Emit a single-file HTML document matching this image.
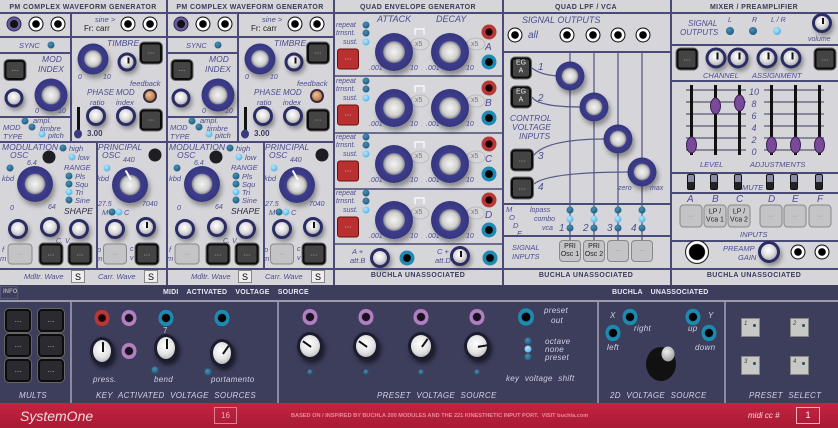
<!DOCTYPE html>
<html><head><meta charset="utf-8"><style>
*{margin:0;padding:0;box-sizing:border-box}
body{width:838px;height:428px;overflow:hidden;background:#d6d6da;font-family:"Liberation Sans",sans-serif;position:relative}
.a{position:absolute}
.c{position:absolute;transform:translate(-50%,-50%)}
.hl{position:absolute;height:1.5px;background:#4a4a78}
.vl{position:absolute;width:1.5px;background:#4a4a78}
.h{position:absolute;font:bold 7px "Liberation Sans",sans-serif;color:#3a3a5c;letter-spacing:.4px;white-space:nowrap;transform:translateX(-50%)}
.t{position:absolute;font:italic 7.5px "Liberation Sans",sans-serif;color:#4c4c90;white-space:nowrap;line-height:9px}
.tb{position:absolute;font:italic 10px "Liberation Sans",sans-serif;color:#4c4c90;white-space:nowrap;line-height:10px}
.sk{border-radius:50%;background:radial-gradient(circle at 45% 40%,#fff,#ddd 45%,#999 90%);border:3px solid #2c2c64;box-shadow:2px 3px 4px rgba(0,0,0,.35)}
.bk{border-radius:50%;background:radial-gradient(circle at 50% 50%,#f4f4f4 0,#d0d0d0 28%,#999 38%,#3d3d8c 42%,#2e2e72 100%);box-shadow:2px 4px 5px rgba(0,0,0,.35)}
.blk{border-radius:50%;background:#1e1e22}
.j{border-radius:50%;background:radial-gradient(circle,#000 0 33%,#fff 38% 58%,#111 63%)}
.jp{border-radius:50%;background:radial-gradient(circle,#111 0 35%,#6a5a9a 40% 60%,#20204a 65%)}
.jr{border-radius:50%;background:radial-gradient(circle,#1a0000 0 30%,#b83838 38% 70%,#501818 75%)}
.jb{border-radius:50%;background:radial-gradient(circle,#000 0 33%,#1d8ab0 40% 70%,#0d4058 75%)}
.jpu{border-radius:50%;background:radial-gradient(circle,#1a1020 0 33%,#b080c0 40% 68%,#40304a 74%)}
.led{width:7px;height:7px;border-radius:50%;background:radial-gradient(circle at 40% 35%,#4a90b8,#124a6a)}
.ledo{width:7px;height:7px;border-radius:50%;background:radial-gradient(circle at 40% 35%,#b0e8ff,#3aa0d8)}
.b{background:#444;border:2.5px solid #0c0c0c;border-radius:4px;color:#bbb;font:8px "Liberation Sans";text-align:center;line-height:14px;box-shadow:0 0 0 1px #666}
.g{background:#c4c4c6;border:1.5px solid #888;border-radius:4px;color:#888;font:7px "Liberation Sans";text-align:center}
.rb{background:#b83030;border:1.5px solid #6a1010;border-radius:3px;color:#f0c0c0;font:8px "Liberation Sans";text-align:center;line-height:16px}
.dk{background:#3d3e5c}
.w{position:absolute;font:italic 8px "Liberation Sans",sans-serif;color:#d0d0e4;white-space:nowrap;letter-spacing:.3px}
.wk{border-radius:50%;background:radial-gradient(circle at 45% 40%,#fff,#e4e4e4 50%,#aaa 95%);border:3px solid #1c1c30;box-shadow:2px 3px 5px rgba(0,0,0,.6)}
.ptr{position:absolute;width:2px;background:#111;left:50%;top:2px;height:45%;transform-origin:50% 100%}
.eg .t{font-size:7px}
</style></head><body>

<!-- ===== PM modules ===== -->
<div class="a" style="left:0;top:0;width:167px;height:285px">
<div class="h" style="left:83px;top:4px">PM COMPLEX WAVEFORM GENERATOR</div>
<div class="hl" style="left:0;top:12px;width:166px"></div>
<i class="c jp" style="left:14px;top:24px;width:15px;height:15px"></i>
<i class="c j" style="left:36px;top:24px;width:15px;height:15px"></i>
<i class="c j" style="left:58px;top:24px;width:15px;height:15px"></i>
<div class="t" style="left:95px;top:15px">sine &gt;</div>
<div class="a" style="left:84px;top:24px;font:8px 'Liberation Sans';color:#222">Fr: carr</div>
<i class="c j" style="left:128px;top:24px;width:15px;height:15px"></i>
<i class="c j" style="left:150px;top:24px;width:15px;height:15px"></i>
<div class="vl" style="left:70px;top:12px;height:129px"></div>
<div class="hl" style="left:0;top:36px;width:166px"></div>
<div class="t" style="left:19px;top:41px">SYNC</div>
<i class="c led" style="left:51px;top:45px"></i>
<div class="hl" style="left:0;top:52px;width:70px"></div>
<div class="c b" style="left:15px;top:70px;width:21px;height:20px">...</div>
<div class="t" style="left:42px;top:55px;font-size:8.5px">MOD</div>
<div class="t" style="left:38px;top:65px;font-size:8.5px">INDEX</div>
<i class="c sk" style="left:14px;top:98px;width:19px;height:19px"></i>
<i class="c bk" style="left:51px;top:95px;width:33px;height:33px"></i>
<div class="t" style="left:35px;top:107px;font-size:7px">0</div>
<div class="t" style="left:58px;top:107px;font-size:7px">10</div>
<div class="hl" style="left:0;top:116px;width:70px"></div>
<div class="t" style="left:3px;top:123px">MOD</div>
<div class="t" style="left:3px;top:132px">TYPE</div>
<i class="c led" style="left:25px;top:121px"></i><i class="c led" style="left:32px;top:127px"></i><i class="c ledo" style="left:42px;top:134px"></i>
<div class="t" style="left:33px;top:116px">ampl.</div>
<div class="t" style="left:40px;top:124px">timbre</div>
<div class="t" style="left:48px;top:131px">pitch</div>
<div class="t" style="left:107px;top:39px;font-size:8.5px">TIMBRE</div>
<i class="c bk" style="left:93px;top:59px;width:31px;height:31px"></i>
<i class="c sk" style="left:127px;top:62px;width:19px;height:19px"><i class="ptr"></i></i>
<div class="c b" style="left:151px;top:53px;width:22px;height:21px">...</div>
<div class="t" style="left:78px;top:73px;font-size:7px">0</div>
<div class="t" style="left:103px;top:73px;font-size:7px">10</div>
<div class="t" style="left:130px;top:79px">feedback</div>
<i class="c" style="left:150px;top:96px;width:14px;height:14px;border-radius:50%;background:radial-gradient(circle at 40% 35%,#f0c090,#a06030);border:2px solid #3a2a40"></i>
<div class="t" style="left:87px;top:88px;font-size:8px">PHASE</div>
<div class="t" style="left:90px;top:98px">ratio</div>
<div class="t" style="left:116px;top:88px;font-size:8px">MOD</div>
<div class="t" style="left:116px;top:98px">index</div>
<i class="c sk" style="left:96px;top:116px;width:20px;height:20px"></i>
<i class="c sk" style="left:126px;top:116px;width:20px;height:20px"></i>
<div class="c b" style="left:151px;top:120px;width:22px;height:21px">...</div>
<div class="a" style="left:77px;top:107px;width:3px;height:26px;background:#111"></div>
<i class="c" style="left:78px;top:134px;width:8px;height:9px;border-radius:50%;background:#3a3a80"></i>
<div class="a" style="left:87px;top:129px;font:bold 8px 'Liberation Sans';color:#3a3a6a">3.00</div>
<div class="hl" style="left:0;top:141px;width:166px"></div>
<div class="t" style="left:2px;top:143px;font-size:8.5px">MODULATION</div>
<div class="t" style="left:10px;top:151px;font-size:8.5px">OSC</div>
<i class="c blk" style="left:49px;top:157px;width:13px;height:13px"></i>
<i class="c led" style="left:63px;top:148px"></i><div class="t" style="left:69px;top:144px">high</div>
<i class="c ledo" style="left:72px;top:157px"></i><div class="t" style="left:78px;top:153px">low</div>
<div class="t" style="left:64px;top:163px">RANGE</div>
<i class="c led" style="left:69px;top:176px"></i><div class="t" style="left:75px;top:172px">Pls</div>
<i class="c led" style="left:69px;top:184px"></i><div class="t" style="left:75px;top:180px">Squ</div>
<i class="c ledo" style="left:69px;top:192px"></i><div class="t" style="left:75px;top:188px">Tri</div>
<i class="c led" style="left:69px;top:200px"></i><div class="t" style="left:75px;top:196px">Sine</div>
<i class="c led" style="left:10px;top:168px"></i><div class="t" style="left:2px;top:174px">kbd</div>
<div class="t" style="left:27px;top:159px;font-size:7px">6.4</div>
<i class="c bk" style="left:35px;top:184px;width:36px;height:36px"></i>
<div class="t" style="left:10px;top:204px;font-size:7px">0</div>
<div class="t" style="left:48px;top:203px;font-size:7px">64</div>
<div class="a" style="left:64px;top:206px;font:italic 8.5px 'Liberation Sans';color:#2a2a40">SHAPE</div>
<i class="c sk" style="left:18px;top:229px;width:20px;height:20px"></i>
<i class="c sk" style="left:50px;top:227px;width:20px;height:20px"></i>
<i class="c sk" style="left:79px;top:229px;width:20px;height:20px"></i>
<div class="t" style="left:56px;top:237px;font-size:7px">C. V.</div>
<div class="t" style="left:2px;top:245px">f</div><div class="t" style="left:0;top:254px">m</div>
<div class="c g" style="left:20px;top:254px;width:25px;height:21px;line-height:18px">...</div>
<div class="c b" style="left:51px;top:254px;width:23px;height:21px;line-height:16px">...</div>
<div class="c b" style="left:80px;top:254px;width:23px;height:21px;line-height:16px">...</div>
<div class="vl" style="left:96px;top:141px;height:127px"></div>
<div class="t" style="left:98px;top:143px;font-size:8.5px">PRINCIPAL</div>
<div class="t" style="left:102px;top:151px;font-size:8.5px">OSC</div>
<i class="c blk" style="left:155px;top:155px;width:13px;height:13px"></i>
<div class="t" style="left:123px;top:156px;font-size:7px">440</div>
<i class="c ledo" style="left:107px;top:168px"></i><div class="t" style="left:97px;top:174px">kbd</div>
<i class="c bk" style="left:130px;top:185px;width:36px;height:36px"><i class="ptr" style="transform:rotate(-30deg);background:#fff;width:2px;height:30%"></i></i>
<div class="t" style="left:98px;top:200px;font-size:7px">27.5</div>
<div class="t" style="left:142px;top:200px;font-size:7px">7040</div>
<div class="t" style="left:102px;top:208px">M</div>
<i class="c led" style="left:112px;top:212px"></i><i class="c ledo" style="left:119px;top:212px"></i>
<div class="t" style="left:124px;top:208px">C</div>
<i class="c sk" style="left:115px;top:229px;width:20px;height:20px"></i>
<i class="c sk" style="left:146px;top:227px;width:20px;height:20px"><i class="ptr"></i></i>
<div class="t" style="left:97px;top:245px">p</div><div class="t" style="left:96px;top:254px">m</div>
<div class="c g" style="left:115px;top:254px;width:24px;height:21px;line-height:18px">...</div>
<div class="t" style="left:130px;top:245px;font-size:7px">c</div><div class="t" style="left:130px;top:254px;font-size:7px">v</div>
<div class="c b" style="left:147px;top:254px;width:23px;height:21px;line-height:16px">...</div>
<div class="hl" style="left:0;top:268px;width:166px"></div>
<div class="t" style="left:24px;top:272px">Mdltr. Wave</div>
<div class="a" style="left:71px;top:270px;width:14px;height:13px;background:#eee;border:1px solid #888;font:9px 'Liberation Sans';text-align:center;line-height:12px">S</div>
<div class="t" style="left:98px;top:272px">Carr. Wave</div>
<div class="a" style="left:144px;top:270px;width:14px;height:13px;background:#eee;border:1px solid #888;font:9px 'Liberation Sans';text-align:center;line-height:12px">S</div>
<div class="vl" style="left:166px;top:0;height:285px"></div>
</div>

<div class="a" style="left:167px;top:0;width:167px;height:285px">
<div class="h" style="left:83px;top:4px">PM COMPLEX WAVEFORM GENERATOR</div>
<div class="hl" style="left:0;top:12px;width:166px"></div>
<i class="c jp" style="left:14px;top:24px;width:15px;height:15px"></i>
<i class="c j" style="left:36px;top:24px;width:15px;height:15px"></i>
<i class="c j" style="left:58px;top:24px;width:15px;height:15px"></i>
<div class="t" style="left:95px;top:15px">sine &gt;</div>
<div class="a" style="left:84px;top:24px;font:8px 'Liberation Sans';color:#222">Fr: carr</div>
<i class="c j" style="left:128px;top:24px;width:15px;height:15px"></i>
<i class="c j" style="left:150px;top:24px;width:15px;height:15px"></i>
<div class="vl" style="left:70px;top:12px;height:129px"></div>
<div class="hl" style="left:0;top:36px;width:166px"></div>
<div class="t" style="left:19px;top:41px">SYNC</div>
<i class="c led" style="left:51px;top:45px"></i>
<div class="hl" style="left:0;top:52px;width:70px"></div>
<div class="c b" style="left:15px;top:70px;width:21px;height:20px">...</div>
<div class="t" style="left:42px;top:55px;font-size:8.5px">MOD</div>
<div class="t" style="left:38px;top:65px;font-size:8.5px">INDEX</div>
<i class="c sk" style="left:14px;top:98px;width:19px;height:19px"></i>
<i class="c bk" style="left:51px;top:95px;width:33px;height:33px"></i>
<div class="t" style="left:35px;top:107px;font-size:7px">0</div>
<div class="t" style="left:58px;top:107px;font-size:7px">10</div>
<div class="hl" style="left:0;top:116px;width:70px"></div>
<div class="t" style="left:3px;top:123px">MOD</div>
<div class="t" style="left:3px;top:132px">TYPE</div>
<i class="c led" style="left:25px;top:121px"></i><i class="c led" style="left:32px;top:127px"></i><i class="c ledo" style="left:42px;top:134px"></i>
<div class="t" style="left:33px;top:116px">ampl.</div>
<div class="t" style="left:40px;top:124px">timbre</div>
<div class="t" style="left:48px;top:131px">pitch</div>
<div class="t" style="left:107px;top:39px;font-size:8.5px">TIMBRE</div>
<i class="c bk" style="left:93px;top:59px;width:31px;height:31px"></i>
<i class="c sk" style="left:127px;top:62px;width:19px;height:19px"><i class="ptr"></i></i>
<div class="c b" style="left:151px;top:53px;width:22px;height:21px">...</div>
<div class="t" style="left:78px;top:73px;font-size:7px">0</div>
<div class="t" style="left:103px;top:73px;font-size:7px">10</div>
<div class="t" style="left:130px;top:79px">feedback</div>
<i class="c" style="left:150px;top:96px;width:14px;height:14px;border-radius:50%;background:radial-gradient(circle at 40% 35%,#f0c090,#a06030);border:2px solid #3a2a40"></i>
<div class="t" style="left:87px;top:88px;font-size:8px">PHASE</div>
<div class="t" style="left:90px;top:98px">ratio</div>
<div class="t" style="left:116px;top:88px;font-size:8px">MOD</div>
<div class="t" style="left:116px;top:98px">index</div>
<i class="c sk" style="left:96px;top:116px;width:20px;height:20px"></i>
<i class="c sk" style="left:126px;top:116px;width:20px;height:20px"></i>
<div class="c b" style="left:151px;top:120px;width:22px;height:21px">...</div>
<div class="a" style="left:77px;top:107px;width:3px;height:26px;background:#111"></div>
<i class="c" style="left:78px;top:134px;width:8px;height:9px;border-radius:50%;background:#3a3a80"></i>
<div class="a" style="left:87px;top:129px;font:bold 8px 'Liberation Sans';color:#3a3a6a">3.00</div>
<div class="hl" style="left:0;top:141px;width:166px"></div>
<div class="t" style="left:2px;top:143px;font-size:8.5px">MODULATION</div>
<div class="t" style="left:10px;top:151px;font-size:8.5px">OSC</div>
<i class="c blk" style="left:49px;top:157px;width:13px;height:13px"></i>
<i class="c led" style="left:63px;top:148px"></i><div class="t" style="left:69px;top:144px">high</div>
<i class="c ledo" style="left:72px;top:157px"></i><div class="t" style="left:78px;top:153px">low</div>
<div class="t" style="left:64px;top:163px">RANGE</div>
<i class="c led" style="left:69px;top:176px"></i><div class="t" style="left:75px;top:172px">Pls</div>
<i class="c led" style="left:69px;top:184px"></i><div class="t" style="left:75px;top:180px">Squ</div>
<i class="c ledo" style="left:69px;top:192px"></i><div class="t" style="left:75px;top:188px">Tri</div>
<i class="c led" style="left:69px;top:200px"></i><div class="t" style="left:75px;top:196px">Sine</div>
<i class="c led" style="left:10px;top:168px"></i><div class="t" style="left:2px;top:174px">kbd</div>
<div class="t" style="left:27px;top:159px;font-size:7px">6.4</div>
<i class="c bk" style="left:35px;top:184px;width:36px;height:36px"></i>
<div class="t" style="left:10px;top:204px;font-size:7px">0</div>
<div class="t" style="left:48px;top:203px;font-size:7px">64</div>
<div class="a" style="left:64px;top:206px;font:italic 8.5px 'Liberation Sans';color:#2a2a40">SHAPE</div>
<i class="c sk" style="left:18px;top:229px;width:20px;height:20px"></i>
<i class="c sk" style="left:50px;top:227px;width:20px;height:20px"></i>
<i class="c sk" style="left:79px;top:229px;width:20px;height:20px"></i>
<div class="t" style="left:56px;top:237px;font-size:7px">C. V.</div>
<div class="t" style="left:2px;top:245px">f</div><div class="t" style="left:0;top:254px">m</div>
<div class="c g" style="left:20px;top:254px;width:25px;height:21px;line-height:18px">...</div>
<div class="c b" style="left:51px;top:254px;width:23px;height:21px;line-height:16px">...</div>
<div class="c b" style="left:80px;top:254px;width:23px;height:21px;line-height:16px">...</div>
<div class="vl" style="left:96px;top:141px;height:127px"></div>
<div class="t" style="left:98px;top:143px;font-size:8.5px">PRINCIPAL</div>
<div class="t" style="left:102px;top:151px;font-size:8.5px">OSC</div>
<i class="c blk" style="left:155px;top:155px;width:13px;height:13px"></i>
<div class="t" style="left:123px;top:156px;font-size:7px">440</div>
<i class="c ledo" style="left:107px;top:168px"></i><div class="t" style="left:97px;top:174px">kbd</div>
<i class="c bk" style="left:130px;top:185px;width:36px;height:36px"><i class="ptr" style="transform:rotate(-30deg);background:#fff;width:2px;height:30%"></i></i>
<div class="t" style="left:98px;top:200px;font-size:7px">27.5</div>
<div class="t" style="left:142px;top:200px;font-size:7px">7040</div>
<div class="t" style="left:102px;top:208px">M</div>
<i class="c led" style="left:112px;top:212px"></i><i class="c ledo" style="left:119px;top:212px"></i>
<div class="t" style="left:124px;top:208px">C</div>
<i class="c sk" style="left:115px;top:229px;width:20px;height:20px"></i>
<i class="c sk" style="left:146px;top:227px;width:20px;height:20px"><i class="ptr"></i></i>
<div class="t" style="left:97px;top:245px">p</div><div class="t" style="left:96px;top:254px">m</div>
<div class="c g" style="left:115px;top:254px;width:24px;height:21px;line-height:18px">...</div>
<div class="t" style="left:130px;top:245px;font-size:7px">c</div><div class="t" style="left:130px;top:254px;font-size:7px">v</div>
<div class="c b" style="left:147px;top:254px;width:23px;height:21px;line-height:16px">...</div>
<div class="hl" style="left:0;top:268px;width:166px"></div>
<div class="t" style="left:24px;top:272px">Mdltr. Wave</div>
<div class="a" style="left:71px;top:270px;width:14px;height:13px;background:#eee;border:1px solid #888;font:9px 'Liberation Sans';text-align:center;line-height:12px">S</div>
<div class="t" style="left:98px;top:272px">Carr. Wave</div>
<div class="a" style="left:144px;top:270px;width:14px;height:13px;background:#eee;border:1px solid #888;font:9px 'Liberation Sans';text-align:center;line-height:12px">S</div>
<div class="vl" style="left:166px;top:0;height:285px"></div>
</div>

<!-- ===== Quad EG ===== -->
<div class="h" style="left:418px;top:4px">QUAD ENVELOPE GENERATOR</div>
<div class="hl" style="left:334px;top:12px;width:168px"></div>
<div class="tb" style="left:377px;top:14px;font-size:9px">ATTACK</div>
<div class="tb" style="left:436px;top:14px;font-size:9px">DECAY</div>
<svg class="a" style="left:334px;top:13px" width="168" height="232">
<g fill="none" stroke="#4a4a78" stroke-width="1.5"><line x1="0" y1="63" x2="168" y2="63"/><line x1="0" y1="120" x2="168" y2="120"/><line x1="0" y1="176" x2="168" y2="176"/><line x1="0" y1="231" x2="168" y2="231"/></g>
<g fill="none" stroke="#fff" stroke-width="1.2">
<path d="M81 22 v-6 h9 v6"/><path d="M81 79 v-6 h9 v6"/><path d="M81 135 v-6 h9 v6"/><path d="M81 191 v-6 h9 v6"/></g>
<g fill="none" stroke="#bbb" stroke-width="1">
<ellipse cx="86" cy="31" rx="9" ry="6"/><ellipse cx="142" cy="31" rx="9" ry="6"/>
<ellipse cx="86" cy="88" rx="9" ry="6"/><ellipse cx="142" cy="88" rx="9" ry="6"/>
<ellipse cx="86" cy="144" rx="9" ry="6"/><ellipse cx="142" cy="144" rx="9" ry="6"/>
<ellipse cx="86" cy="200" rx="9" ry="6"/><ellipse cx="142" cy="200" rx="9" ry="6"/></g>
</svg>

<div class="a eg" style="left:334px;top:13px">
 <div class="t" style="left:2px;top:8px">repeat</div><div class="t" style="left:2px;top:16px">trnsnt.</div><div class="t" style="left:9px;top:25px">sust.</div>
 <i class="c led" style="left:32px;top:12px"></i><i class="c led" style="left:32px;top:20px"></i><i class="c ledo" style="left:32px;top:29px"></i>
 <div class="c rb" style="left:14px;top:46px;width:22px;height:21px">...</div>
 <i class="c bk" style="left:60px;top:39px;width:38px;height:38px"></i><i class="c bk" style="left:116px;top:39px;width:38px;height:38px"></i>
 <div class="t" style="left:81px;top:27px;color:#777;font-style:normal">x5</div><div class="t" style="left:137px;top:27px;color:#777;font-style:normal">x5</div>
 <div class="t" style="left:35px;top:51px">.001</div><div class="t" style="left:76px;top:51px">10</div><div class="t" style="left:92px;top:51px">.001</div><div class="t" style="left:132px;top:51px">10</div>
 <i class="c jr" style="left:155px;top:19px;width:15px;height:15px"></i><div class="tb" style="left:151px;top:30px">A</div><i class="c jb" style="left:155px;top:49px;width:15px;height:15px"></i>
</div>
<div class="a eg" style="left:334px;top:69px">
 <div class="t" style="left:2px;top:8px">repeat</div><div class="t" style="left:2px;top:16px">trnsnt.</div><div class="t" style="left:9px;top:25px">sust.</div>
 <i class="c led" style="left:32px;top:12px"></i><i class="c led" style="left:32px;top:20px"></i><i class="c ledo" style="left:32px;top:29px"></i>
 <div class="c rb" style="left:14px;top:46px;width:22px;height:21px">...</div>
 <i class="c bk" style="left:60px;top:39px;width:38px;height:38px"></i><i class="c bk" style="left:116px;top:39px;width:38px;height:38px"></i>
 <div class="t" style="left:81px;top:27px;color:#777;font-style:normal">x5</div><div class="t" style="left:137px;top:27px;color:#777;font-style:normal">x5</div>
 <div class="t" style="left:35px;top:51px">.001</div><div class="t" style="left:76px;top:51px">10</div><div class="t" style="left:92px;top:51px">.001</div><div class="t" style="left:132px;top:51px">10</div>
 <i class="c jr" style="left:155px;top:19px;width:15px;height:15px"></i><div class="tb" style="left:151px;top:30px">B</div><i class="c jb" style="left:155px;top:49px;width:15px;height:15px"></i>
</div>
<div class="a eg" style="left:334px;top:125px">
 <div class="t" style="left:2px;top:8px">repeat</div><div class="t" style="left:2px;top:16px">trnsnt.</div><div class="t" style="left:9px;top:25px">sust.</div>
 <i class="c led" style="left:32px;top:12px"></i><i class="c led" style="left:32px;top:20px"></i><i class="c ledo" style="left:32px;top:29px"></i>
 <div class="c rb" style="left:14px;top:46px;width:22px;height:21px">...</div>
 <i class="c bk" style="left:60px;top:39px;width:38px;height:38px"></i><i class="c bk" style="left:116px;top:39px;width:38px;height:38px"></i>
 <div class="t" style="left:81px;top:27px;color:#777;font-style:normal">x5</div><div class="t" style="left:137px;top:27px;color:#777;font-style:normal">x5</div>
 <div class="t" style="left:35px;top:51px">.001</div><div class="t" style="left:76px;top:51px">10</div><div class="t" style="left:92px;top:51px">.001</div><div class="t" style="left:132px;top:51px">10</div>
 <i class="c jr" style="left:155px;top:19px;width:15px;height:15px"></i><div class="tb" style="left:151px;top:30px">C</div><i class="c jb" style="left:155px;top:49px;width:15px;height:15px"></i>
</div>
<div class="a eg" style="left:334px;top:181px">
 <div class="t" style="left:2px;top:8px">repeat</div><div class="t" style="left:2px;top:16px">trnsnt.</div><div class="t" style="left:9px;top:25px">sust.</div>
 <i class="c led" style="left:32px;top:12px"></i><i class="c led" style="left:32px;top:20px"></i><i class="c ledo" style="left:32px;top:29px"></i>
 <div class="c rb" style="left:14px;top:46px;width:22px;height:21px">...</div>
 <i class="c bk" style="left:60px;top:39px;width:38px;height:38px"></i><i class="c bk" style="left:116px;top:39px;width:38px;height:38px"></i>
 <div class="t" style="left:81px;top:27px;color:#777;font-style:normal">x5</div><div class="t" style="left:137px;top:27px;color:#777;font-style:normal">x5</div>
 <div class="t" style="left:35px;top:51px">.001</div><div class="t" style="left:76px;top:51px">10</div><div class="t" style="left:92px;top:51px">.001</div><div class="t" style="left:132px;top:51px">10</div>
 <i class="c jr" style="left:155px;top:19px;width:15px;height:15px"></i><div class="tb" style="left:151px;top:30px">D</div><i class="c jb" style="left:155px;top:49px;width:15px;height:15px"></i>
</div>
<div class="t" style="left:352px;top:247px">A +</div><div class="t" style="left:350px;top:256px">att.B</div>
<i class="c sk" style="left:380px;top:258px;width:20px;height:20px"></i>
<i class="c jb" style="left:407px;top:258px;width:15px;height:15px"></i>
<div class="t" style="left:437px;top:247px">C +</div><div class="t" style="left:435px;top:256px">att.D</div>
<i class="c sk" style="left:460px;top:256px;width:20px;height:20px"><i class="ptr"></i></i>
<i class="c jb" style="left:490px;top:258px;width:15px;height:15px"></i>
<div class="hl" style="left:334px;top:268px;width:168px"></div>
<div class="h" style="left:418px;top:272px">BUCHLA UNASSOCIATED</div>
<div class="vl" style="left:502px;top:0;height:285px"></div>

<!-- ===== Quad LPF/VCA ===== -->
<div class="h" style="left:586px;top:4px">QUAD LPF / VCA</div>
<div class="hl" style="left:502px;top:12px;width:168px"></div>
<div class="tb" style="left:522px;top:15px;font-size:9px">SIGNAL OUTPUTS</div>
<i class="c j" style="left:515px;top:35px;width:15px;height:15px"></i><div class="tb" style="left:528px;top:31px">all</div>
<i class="c j" style="left:567px;top:35px;width:15px;height:15px"></i>
<i class="c j" style="left:593px;top:35px;width:15px;height:15px"></i>
<i class="c j" style="left:618px;top:35px;width:15px;height:15px"></i>
<i class="c j" style="left:643px;top:35px;width:15px;height:15px"></i>
<div class="hl" style="left:502px;top:51px;width:168px"></div>
<svg class="a" style="left:502px;top:0" width="168" height="268">
<g stroke="#5a5a8a" stroke-width="1.3" fill="none">
<line x1="68" y1="52" x2="68" y2="240"/><line x1="92" y1="52" x2="92" y2="240"/><line x1="116" y1="52" x2="116" y2="240"/><line x1="140" y1="52" x2="140" y2="240"/>
<path d="M30 68 Q40 76 60 76"/><path d="M30 97 Q36 107 80 107"/><path d="M30 158 Q40 139 104 139"/><path d="M30 186 Q40 172 128 172"/>
</g></svg>
<div class="c b" style="left:521px;top:68px;width:20px;height:21px;font-size:7px;line-height:8px;color:#eee">EG<br>A</div>
<div class="c b" style="left:521px;top:97px;width:20px;height:21px;font-size:7px;line-height:8px;color:#eee">EG<br>A</div>
<div class="tb" style="left:538px;top:63px">1</div><div class="tb" style="left:538px;top:94px">2</div>
<i class="c bk" style="left:570px;top:76px;width:29px;height:29px"></i>
<i class="c bk" style="left:594px;top:107px;width:29px;height:29px"></i>
<i class="c bk" style="left:618px;top:139px;width:29px;height:29px"></i>
<i class="c bk" style="left:642px;top:172px;width:29px;height:29px"></i>
<div class="t" style="left:510px;top:114px;font-size:8.5px">CONTROL</div>
<div class="t" style="left:512px;top:123px;font-size:8.5px">VOLTAGE</div>
<div class="t" style="left:519px;top:132px;font-size:8.5px">INPUTS</div>
<div class="c b" style="left:522px;top:160px;width:22px;height:21px;line-height:15px">...</div>
<div class="c b" style="left:522px;top:188px;width:22px;height:21px;line-height:15px">...</div>
<div class="tb" style="left:538px;top:152px">3</div><div class="tb" style="left:538px;top:183px">4</div>
<div class="t" style="left:618px;top:184px;font-size:7px">zero</div><div class="t" style="left:650px;top:184px;font-size:7px">max</div>
<div class="hl" style="left:502px;top:203px;width:168px"></div>
<div class="t" style="left:506px;top:205px">M</div><div class="t" style="left:509px;top:213px">O</div><div class="t" style="left:513px;top:221px">D</div><div class="t" style="left:517px;top:229px">E</div>
<div class="t" style="left:530px;top:206px;font-size:7px">lopass</div><div class="t" style="left:534px;top:215px;font-size:7px">combo</div><div class="t" style="left:542px;top:224px;font-size:7px">vca</div>
<i class="c led" style="left:570px;top:210px"></i><i class="c ledo" style="left:570px;top:219px"></i><i class="c led" style="left:570px;top:228px"></i>
<i class="c led" style="left:594px;top:210px"></i><i class="c ledo" style="left:594px;top:219px"></i><i class="c led" style="left:594px;top:228px"></i>
<i class="c led" style="left:618px;top:210px"></i><i class="c ledo" style="left:618px;top:219px"></i><i class="c led" style="left:618px;top:228px"></i>
<i class="c led" style="left:642px;top:210px"></i><i class="c ledo" style="left:642px;top:219px"></i><i class="c led" style="left:642px;top:228px"></i>
<div class="tb" style="left:559px;top:224px">1</div><div class="tb" style="left:583px;top:224px">2</div><div class="tb" style="left:607px;top:224px">3</div><div class="tb" style="left:631px;top:224px">4</div>
<div class="hl" style="left:502px;top:235px;width:168px"></div>
<div class="t" style="left:512px;top:243px">SIGNAL</div><div class="t" style="left:512px;top:252px">INPUTS</div>
<div class="c g" style="left:570px;top:251px;width:22px;height:22px;color:#222;line-height:8px;padding-top:2px">PRI<br>Osc 1</div>
<div class="c g" style="left:594px;top:251px;width:22px;height:22px;color:#222;line-height:8px;padding-top:2px">PRI<br>Osc 2</div>
<div class="c g" style="left:618px;top:251px;width:22px;height:22px;line-height:18px">...</div>
<div class="c g" style="left:642px;top:251px;width:22px;height:22px;line-height:18px">...</div>
<div class="hl" style="left:502px;top:268px;width:168px"></div>
<div class="h" style="left:586px;top:272px">BUCHLA UNASSOCIATED</div>
<div class="vl" style="left:670px;top:0;height:285px"></div>

<!-- ===== Mixer ===== -->
<div class="h" style="left:754px;top:4px">MIXER / PREAMPLIFIER</div>
<div class="hl" style="left:670px;top:12px;width:168px"></div>
<div class="t" style="left:688px;top:19px;font-size:8px">SIGNAL</div><div class="t" style="left:680px;top:28px;font-size:8px">OUTPUTS</div>
<div class="t" style="left:728px;top:16px;font-size:7px">L</div><div class="t" style="left:752px;top:16px;font-size:7px">R</div><div class="t" style="left:771px;top:16px;font-size:7px">L / R</div>
<i class="c led" style="left:730px;top:31px;width:8px;height:8px"></i><i class="c led" style="left:753px;top:31px;width:8px;height:8px"></i><i class="c ledo" style="left:777px;top:31px;width:8px;height:8px"></i>
<i class="c sk" style="left:822px;top:23px;width:20px;height:20px"><i class="ptr"></i></i>
<div class="t" style="left:808px;top:35px;font-size:7px">volume</div>
<div class="hl" style="left:670px;top:44px;width:168px"></div>
<div class="c b" style="left:687px;top:59px;width:21px;height:21px;line-height:15px">...</div>
<div class="c b" style="left:825px;top:59px;width:21px;height:21px;line-height:15px">...</div>
<i class="c sk" style="left:716px;top:58px;width:21px;height:21px"><i class="ptr"></i></i>
<i class="c sk" style="left:738px;top:58px;width:21px;height:21px"><i class="ptr"></i></i>
<i class="c sk" style="left:767px;top:58px;width:21px;height:21px"><i class="ptr"></i></i>
<i class="c sk" style="left:791px;top:58px;width:21px;height:21px"><i class="ptr"></i></i>
<div class="t" style="left:703px;top:71px">CHANNEL</div><div class="t" style="left:752px;top:71px">ASSIGNMENT</div>
<div class="hl" style="left:670px;top:80px;width:168px"></div>
<svg class="a" style="left:670px;top:80px" width="168" height="92">
<g stroke="#3a3a60" stroke-width="1"><line x1="16" y1="10" x2="76" y2="10"/><line x1="16" y1="22" x2="76" y2="22"/><line x1="16" y1="34" x2="76" y2="34"/><line x1="16" y1="46" x2="76" y2="46"/><line x1="16" y1="58" x2="76" y2="58"/><line x1="16" y1="70" x2="76" y2="70"/>
<line x1="94" y1="10" x2="154" y2="10"/><line x1="94" y1="22" x2="154" y2="22"/><line x1="94" y1="34" x2="154" y2="34"/><line x1="94" y1="46" x2="154" y2="46"/><line x1="94" y1="58" x2="154" y2="58"/><line x1="94" y1="70" x2="154" y2="70"/></g>
<g fill="#111"><rect x="20" y="5" width="3" height="70"/><rect x="44" y="5" width="3" height="70"/><rect x="68" y="5" width="3" height="70"/><rect x="100" y="5" width="3" height="70"/><rect x="124" y="5" width="3" height="70"/><rect x="148" y="5" width="3" height="70"/></g>
<g fill="#7a4a9a" stroke="#3a2050"><ellipse cx="21.5" cy="65" rx="5" ry="8"/><ellipse cx="45.5" cy="26" rx="5" ry="8"/><ellipse cx="69.5" cy="23" rx="5" ry="8"/><ellipse cx="101.5" cy="65" rx="5" ry="8"/><ellipse cx="125.5" cy="65" rx="5" ry="8"/><ellipse cx="149.5" cy="65" rx="5" ry="8"/></g>
</svg>
<div class="tb" style="left:749px;top:86px;line-height:12px;font-size:9px;text-align:center;width:10px">10<br>8<br>6<br>4<br>2<br>0</div>
<div class="t" style="left:700px;top:160px">LEVEL</div><div class="t" style="left:750px;top:160px">ADJUSTMENTS</div>
<div class="hl" style="left:670px;top:172px;width:168px"></div>
<div class="c" style="left:691px;top:182px;width:8px;height:16px;background:linear-gradient(#8a8aa8 50%,#222 50%);border:1px solid #111;border-radius:2px"></div>
<div class="c" style="left:714px;top:182px;width:8px;height:16px;background:linear-gradient(#8a8aa8 50%,#222 50%);border:1px solid #111;border-radius:2px"></div>
<div class="c" style="left:738px;top:182px;width:8px;height:16px;background:linear-gradient(#8a8aa8 50%,#222 50%);border:1px solid #111;border-radius:2px"></div>
<div class="c" style="left:770px;top:182px;width:8px;height:16px;background:linear-gradient(#8a8aa8 50%,#222 50%);border:1px solid #111;border-radius:2px"></div>
<div class="c" style="left:794px;top:182px;width:8px;height:16px;background:linear-gradient(#8a8aa8 50%,#222 50%);border:1px solid #111;border-radius:2px"></div>
<div class="c" style="left:819px;top:182px;width:8px;height:16px;background:linear-gradient(#8a8aa8 50%,#222 50%);border:1px solid #111;border-radius:2px"></div>
<div class="t" style="left:742px;top:183px">MUTE</div>
<div class="hl" style="left:670px;top:192px;width:168px"></div>
<div class="tb" style="left:687px;top:195px">A</div><div class="tb" style="left:712px;top:195px">B</div><div class="tb" style="left:736px;top:195px">C</div><div class="tb" style="left:768px;top:195px">D</div><div class="tb" style="left:792px;top:195px">E</div><div class="tb" style="left:817px;top:195px">F</div>
<div class="c g" style="left:691px;top:216px;width:23px;height:23px;line-height:20px">...</div>
<div class="c g" style="left:715px;top:216px;width:23px;height:23px;color:#222;line-height:8px;padding-top:3px">LP /<br>Vca 1</div>
<div class="c g" style="left:739px;top:216px;width:23px;height:23px;color:#222;line-height:8px;padding-top:3px">LP /<br>Vca 2</div>
<div class="c g" style="left:771px;top:216px;width:23px;height:23px;line-height:20px">...</div>
<div class="c g" style="left:795px;top:216px;width:23px;height:23px;line-height:20px">...</div>
<div class="c g" style="left:820px;top:216px;width:23px;height:23px;line-height:20px">...</div>
<div class="t" style="left:740px;top:230px">INPUTS</div>
<div class="hl" style="left:670px;top:240px;width:168px"></div>
<i class="c" style="left:697px;top:252px;width:24px;height:24px;border-radius:50%;background:radial-gradient(circle,#000 0 45%,#fff 50% 62%,#111 67%)"></i>
<div class="t" style="left:723px;top:244px">PREAMP</div><div class="t" style="left:738px;top:253px">GAIN</div>
<i class="c sk" style="left:769px;top:252px;width:22px;height:22px"></i>
<i class="c j" style="left:798px;top:252px;width:15px;height:15px"></i>
<i class="c j" style="left:822px;top:252px;width:15px;height:15px"></i>
<div class="hl" style="left:670px;top:268px;width:168px"></div>
<div class="h" style="left:754px;top:272px">BUCHLA UNASSOCIATED</div>

<!-- ===== Bottom dark area ===== -->
<div class="a dk" style="left:0;top:285px;width:838px;height:118px"></div>
<div class="a" style="left:0;top:286px;width:18px;height:13px;border:1px solid #55577a;font:bold 6px 'Liberation Sans';color:#aaa;line-height:11px;padding-left:2px">INFO</div>
<div class="a" style="left:163px;top:289px;font:bold 7px 'Liberation Sans';color:#e8e8f4;word-spacing:6px;letter-spacing:.2px">MIDI ACTIVATED VOLTAGE SOURCE</div>
<div class="a" style="left:612px;top:289px;font:bold 7px 'Liberation Sans';color:#e8e8f4;word-spacing:6px;letter-spacing:.2px">BUCHLA UNASSOCIATED</div>
<div class="a" style="left:0;top:300px;width:838px;height:2px;background:#9c9cb0"></div>
<div class="a" style="left:70px;top:302px;width:2px;height:101px;background:#8a8aa0"></div>
<div class="a" style="left:277px;top:302px;width:2px;height:101px;background:#8a8aa0"></div>
<div class="a" style="left:597px;top:302px;width:2px;height:101px;background:#8a8aa0"></div>
<div class="a" style="left:724px;top:302px;width:2px;height:101px;background:#8a8aa0"></div>
<div class="a b" style="left:5px;top:309px;width:26px;height:23px;line-height:18px;background:#2a2a30">...</div>
<div class="a b" style="left:38px;top:309px;width:26px;height:23px;line-height:18px;background:#2a2a30">...</div>
<div class="a b" style="left:5px;top:334px;width:26px;height:23px;line-height:18px;background:#2a2a30">...</div>
<div class="a b" style="left:38px;top:334px;width:26px;height:23px;line-height:18px;background:#2a2a30">...</div>
<div class="a b" style="left:5px;top:359px;width:26px;height:23px;line-height:18px;background:#2a2a30">...</div>
<div class="a b" style="left:38px;top:359px;width:26px;height:23px;line-height:18px;background:#2a2a30">...</div>
<div class="w" style="left:19px;top:391px">MULTS</div>
<i class="c jr" style="left:102px;top:318px;width:15px;height:17px"></i>
<i class="c jpu" style="left:129px;top:318px;width:15px;height:17px"></i>
<i class="c jb" style="left:166px;top:318px;width:15px;height:17px"></i>
<i class="c jb" style="left:222px;top:318px;width:15px;height:17px"></i>
<div class="w" style="left:163px;top:326px;font-style:normal">7</div>
<i class="c wk" style="left:102px;top:351px;width:24px;height:28px"><i class="ptr"></i></i>
<i class="c jpu" style="left:129px;top:351px;width:15px;height:17px"></i>
<i class="c wk" style="left:166px;top:348px;width:24px;height:28px"><i class="ptr"></i></i>
<i class="c wk" style="left:222px;top:353px;width:24px;height:28px"><i class="ptr" style="transform:rotate(35deg)"></i></i>
<i class="c led" style="left:155px;top:370px"></i><i class="c led" style="left:208px;top:372px"></i>
<div class="w" style="left:93px;top:375px">press.</div><div class="w" style="left:154px;top:375px">bend</div><div class="w" style="left:211px;top:375px">portamento</div>
<div class="w" style="left:96px;top:391px;word-spacing:3px">KEY ACTIVATED VOLTAGE SOURCES</div>
<i class="c jpu" style="left:310px;top:317px;width:15px;height:17px"></i>
<i class="c jpu" style="left:366px;top:317px;width:15px;height:17px"></i>
<i class="c jpu" style="left:421px;top:317px;width:15px;height:17px"></i>
<i class="c jpu" style="left:477px;top:317px;width:15px;height:17px"></i>
<i class="c wk" style="left:310px;top:346px;width:26px;height:28px"><i class="ptr" style="transform:rotate(-55deg)"></i></i>
<i class="c wk" style="left:366px;top:346px;width:26px;height:28px"><i class="ptr" style="transform:rotate(-55deg)"></i></i>
<i class="c wk" style="left:421px;top:346px;width:26px;height:28px"><i class="ptr" style="transform:rotate(35deg)"></i></i>
<i class="c wk" style="left:477px;top:346px;width:26px;height:28px"><i class="ptr" style="transform:rotate(80deg)"></i></i>
<i class="c led" style="left:310px;top:372px;width:5px;height:5px"></i><i class="c led" style="left:366px;top:372px;width:5px;height:5px"></i><i class="c led" style="left:421px;top:372px;width:5px;height:5px"></i><i class="c led" style="left:477px;top:372px;width:5px;height:5px"></i>
<i class="c jb" style="left:526px;top:317px;width:16px;height:18px"></i>
<div class="w" style="left:544px;top:306px">preset</div><div class="w" style="left:551px;top:316px">out</div>
<i class="c led" style="left:528px;top:341px"></i><i class="c ledo" style="left:528px;top:349px"></i><i class="c led" style="left:528px;top:357px"></i>
<div class="w" style="left:545px;top:337px">octave</div><div class="w" style="left:545px;top:345px">none</div><div class="w" style="left:545px;top:353px">preset</div>
<div class="w" style="left:506px;top:374px;word-spacing:3px">key voltage shift</div>
<div class="w" style="left:377px;top:391px;word-spacing:3px">PRESET VOLTAGE SOURCE</div>
<div class="w" style="left:610px;top:311px">X</div><i class="c jb" style="left:630px;top:317px;width:15px;height:17px"></i><div class="w" style="left:634px;top:324px">right</div>
<i class="c jb" style="left:613px;top:333px;width:15px;height:17px"></i><div class="w" style="left:607px;top:343px">left</div>
<i class="c jb" style="left:693px;top:317px;width:15px;height:17px"></i><div class="w" style="left:708px;top:311px">Y</div><div class="w" style="left:688px;top:324px">up</div>
<i class="c jb" style="left:709px;top:333px;width:15px;height:17px"></i><div class="w" style="left:695px;top:343px">down</div>
<i class="c" style="left:661px;top:364px;width:30px;height:34px;border-radius:50%;background:#111"></i>
<i class="c" style="left:668px;top:354px;width:13px;height:15px;border-radius:50%;background:radial-gradient(circle at 40% 35%,#eee,#888)"></i>
<div class="w" style="left:610px;top:391px;word-spacing:3px">2D VOLTAGE SOURCE</div>
<div class="a" style="left:741px;top:318px;width:19px;height:19px;background:#c8c8c4;border:1px solid #888;font:italic 6px 'Liberation Sans';color:#444;padding:2px">1<i class="a" style="left:11px;top:5px;width:3px;height:3px;border-radius:50%;background:#2a4a6a"></i></div>
<div class="a" style="left:790px;top:318px;width:19px;height:19px;background:#c8c8c4;border:1px solid #888;font:italic 6px 'Liberation Sans';color:#444;padding:2px">2<i class="a" style="left:11px;top:5px;width:3px;height:3px;border-radius:50%;background:#2a4a6a"></i></div>
<div class="a" style="left:741px;top:356px;width:19px;height:19px;background:#c8c8c4;border:1px solid #888;font:italic 6px 'Liberation Sans';color:#444;padding:2px">3<i class="a" style="left:11px;top:5px;width:3px;height:3px;border-radius:50%;background:#2a4a6a"></i></div>
<div class="a" style="left:790px;top:356px;width:19px;height:19px;background:#c8c8c4;border:1px solid #888;font:italic 6px 'Liberation Sans';color:#444;padding:2px">4<i class="a" style="left:11px;top:5px;width:3px;height:3px;border-radius:50%;background:#2a4a6a"></i></div>
<div class="w" style="left:749px;top:391px;word-spacing:3px">PRESET SELECT</div>

<div class="a" style="left:0;top:403px;width:838px;height:25px;background:linear-gradient(#c42440,#a81a34)"></div>
<div class="a" style="left:20px;top:408px;font:italic 14px 'Liberation Sans';color:#f4dce0">SystemOne</div>
<div class="a" style="left:214px;top:407px;width:23px;height:17px;border:1px solid #e08090;font:8px 'Liberation Sans';color:#f0b0b8;text-align:center;line-height:15px">16</div>
<div class="a" style="left:291px;top:413px;font:bold 5.6px 'Liberation Sans';color:#e88a98;white-space:nowrap">BASED ON / INSPIRED BY BUCHLA 200 MODULES AND THE 221 KINESTHETIC INPUT PORT.&nbsp; VISIT buchla.com</div>
<div class="a" style="left:748px;top:411px;font:italic 8px 'Liberation Sans';color:#f4dce0">midi cc #</div>
<div class="a" style="left:796px;top:407px;width:24px;height:17px;border:1px solid #f0b0b8;font:9px 'Liberation Sans';color:#fff;text-align:center;line-height:15px">1</div>
</body></html>
